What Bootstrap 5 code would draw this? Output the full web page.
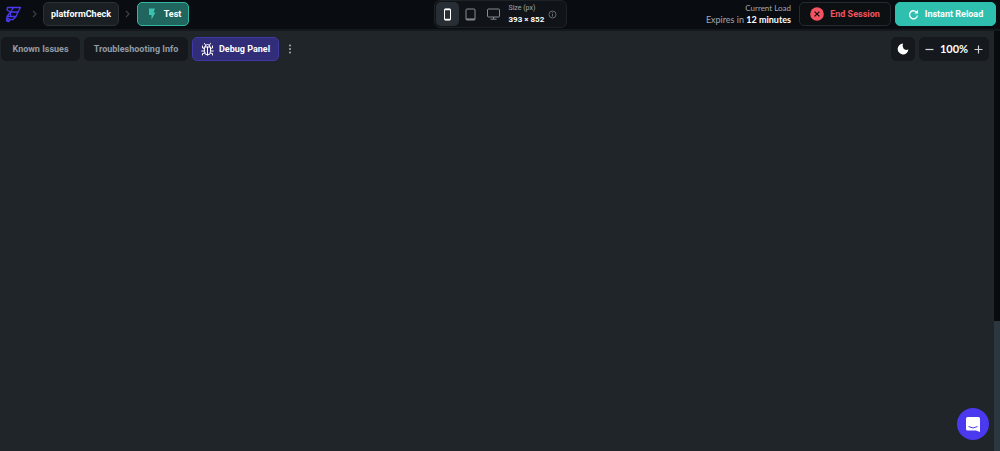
<!DOCTYPE html>
<html lang="en">
<head>
<meta charset="utf-8">
<meta name="viewport" content="width=device-width, initial-scale=1">
<title>platformCheck – Test</title>
<link href="https://cdn.jsdelivr.net/npm/bootstrap@5.3.0/dist/css/bootstrap.min.css" rel="stylesheet">
<style>
  body { background: #1f2528; color: #fff; font-family: Lato, "Liberation Sans", sans-serif; font-size: 10px; line-height: 12px; }
  svg { display: block; flex: none; }
  .topbar { background: #090d11; height: 31px; padding: 0 4px 1px; border-bottom: 2px solid #14191d; }
  .side { flex: 1 1 0; min-width: 0; }
  .chip { display: flex; align-items: center; justify-content: center; height: 24px; padding: 0 6px; border: 1px solid #15191d; border-radius: 5px; background: #15191d; color: #fff; font-family: Roboto, "Liberation Sans", sans-serif; font-size: 9px; line-height: 12px; font-weight: 700; text-decoration: none; white-space: nowrap; }
  .chip-project { background: #1a1f23; border-color: #2b3135; min-width: 76px; }
  .chip-test { background: #20665e; border-color: #32b7a3; min-width: 52px; gap: 5px; }
  .chip-end { background: #0c1013; border-color: #252b30; color: #f2555f; min-width: 92px; gap: 6px; }
  .chip-reload { background: #2fbfae; border-color: #2fbfae; min-width: 101px; gap: 6px; }
  .chip-muted { color: #929ba5; }
  .chip-issues { min-width: 79px; }
  .chip-trouble { min-width: 104px; }
  .chip-debug { background: #322d78; border-color: #4038a4; min-width: 87px; gap: 5px; }
  .devices { height: 28px; padding: 1px; border: 1px solid #1c2226; border-radius: 6px; background: #101418; min-width: 133px; }
  .device { width: 23px; height: 24px; padding: 0; border: 0; border-radius: 5px; background: transparent; color: #858c92; display: flex; align-items: center; justify-content: center; }
  .device.active { background: #272e35; color: #fff; }
  .tiny { font-family: Roboto, "Liberation Sans", sans-serif; font-size: 7px; line-height: 12px; white-space: nowrap; }
  .tiny .fw-bold { font-size: 8px; }
  .soft { color: #a1a8af; }
  .session { font-size: 9px; line-height: 12px; white-space: nowrap; }
  .session-title { font-size: 8px; }
  .toolbar { padding: 6px 5px 0 1px; gap: 4px; }
  .plain { background: none; border: 0; padding: 0; color: #d0d4d8; display: flex; align-items: center; justify-content: center; }
  .more { width: 14px; height: 24px; }
  .theme { width: 24px; padding: 0; }
  .zoom { width: 70px; padding: 0 5px; justify-content: space-between; font-family: Lato, "Liberation Sans", sans-serif; font-size: 11px; }
  .rail { width: 6px; background: #2c363e; }
  .thumb { height: 69%; background: #080b0e; }
  .chat { position: fixed; right: 11px; bottom: 11px; width: 32px; height: 32px; border: 0; border-radius: 50%; padding: 0; background: #4b39ef; display: flex; align-items: center; justify-content: center; }
</style>
</head>
<body class="d-flex flex-column vh-100 overflow-hidden">
<header class="topbar d-flex align-items-center flex-shrink-0">
  <nav class="side d-flex align-items-center" aria-label="Breadcrumb">
    <a href="#" aria-label="Home"><svg width="19" height="19" viewBox="0 0 19 19" fill="none" stroke="#4b39ef" stroke-width="1.300" stroke-linejoin="round"><path d="M3.500 2.500h13l-2.500 4.500H6.500L3 5z"/><path d="M9.500 2.500L6.500 7v4.500M14 7l-2 4.500H3L6.500 7M3 11.500V15l1.500 1.500L6.500 14.500H9l3-3"/><circle cx="4" cy="15" r="1.500"/></svg></a>
    <svg width="20" height="10" viewBox="0 0 20 10" fill="none" stroke="#3a4147" stroke-width="1.200"><path d="M10 2l3 3-3 3"/></svg>
    <a class="chip chip-project" href="#">platformCheck</a>
    <svg width="18" height="10" viewBox="0 0 18 10" fill="none" stroke="#3a4147" stroke-width="1.200"><path d="M7 2l3 3-3 3"/></svg>
    <button class="chip chip-test" type="button"><svg width="14" height="12" viewBox="-2 0 14 12" fill="#39c4af"><path d="M2 .500h6L6.500 4.500H8.500L4.500 11.500V7H2z"/></svg>Test</button>
  </nav>

  <div class="devices d-flex align-items-center">
    <button class="device active" type="button" aria-label="Phone"><svg width="9" height="13" viewBox="0 0 9 13" fill="none" stroke="currentColor"><rect x="1.500" y="1" width="6" height="11" rx="1"/><path d="M1.500 1.500h6M1.500 11.500h6" stroke-width="1.500"/></svg></button>
    <button class="device" type="button" aria-label="Tablet"><svg width="11" height="13" viewBox="0 0 11 13" fill="none" stroke="currentColor"><rect x="1" y="1" width="9" height="11" rx="1"/><path d="M1 11.200h9" stroke-width="1.500"/></svg></button>
    <button class="device" type="button" aria-label="Desktop"><svg width="13" height="12" viewBox="0 0 13 12" fill="none" stroke="currentColor"><rect x=".5" y="1" width="12" height="8" rx="1"/><path d="M3.500 11.200h6M6.500 9v2"/></svg></button>
    <div class="tiny ms-1"><div class="soft">Size (px)</div><div class="fw-bold">393 × 852</div></div>
    <svg class="ms-1" width="9" height="9" viewBox="0 0 9 9" fill="none" stroke="#626a70"><circle cx="4.500" cy="4.500" r="3.500"/><path d="M4.500 4v2.500M4.500 2.300v1"/></svg>
  </div>

  <div class="side d-flex align-items-center justify-content-end">
    <div class="session text-end soft me-2"><div class="session-title">Current Load</div><div>Expires in <span class="fw-bold text-white">12 minutes</span></div></div>
    <button class="chip chip-end me-1" type="button"><svg width="14" height="14" viewBox="0 0 14 14"><circle cx="7" cy="7" r="6.800" fill="#f45462"/><path d="M4.600 4.600l4.800 4.800M9.400 4.600l-4.800 4.800" stroke="#0c1013" stroke-width="1.300"/></svg>End Session</button>
    <button class="chip chip-reload" type="button"><svg width="11" height="11" viewBox="0 0 11 11" fill="none" stroke="#fff" stroke-width="1.300"><path d="M9 3.700A4 4 0 1 0 9.500 6.500"/><path d="M10 .8v3.700H6.300z" fill="#fff" stroke="none"/></svg>Instant Reload</button>
  </div>
</header>

<main class="d-flex flex-grow-1">
  <div class="flex-grow-1">
    <div class="toolbar d-flex align-items-center">
      <button class="chip chip-muted chip-issues" type="button">Known Issues</button>
      <button class="chip chip-muted chip-trouble" type="button">Troubleshooting Info</button>
      <button class="chip chip-debug" type="button"><svg width="13" height="14" viewBox="0 0 13 14" fill="none" stroke="#fff" stroke-linecap="round"><path d="M3.500 5h6v4.500a3 3.500 0 0 1-6 0zM6.500 5v8"/><path d="M4 5a2.500 2.500 0 0 1 5 0M4.500 3L3.500 1.500M8.500 3l1-1.500M3.500 6.500L1.500 6V4M3.500 9H.7M3.800 11L1.500 11.500V13M9.500 6.500l2-.5V4M9.500 9h2.800M9.200 11l2.300.5V13"/></svg>Debug Panel</button>
      <button class="plain more" type="button" aria-label="More"><svg width="4" height="10" viewBox="0 0 4 10" fill="#aab0b5"><circle cx="2" cy="1.500" r="1"/><circle cx="2" cy="5" r="1"/><circle cx="2" cy="8.500" r="1"/></svg></button>
      <button class="chip theme ms-auto" type="button" aria-label="Dark mode"><svg width="12" height="12" viewBox="0 0 12 12" fill="#fff"><path d="M6 .6A5.400 5.400 0 1 0 11.400 6.600Q8 7.600 6.500 5.500 5 3 6 .6z"/></svg></button>
      <div class="chip zoom">
        <button class="plain" type="button" aria-label="Zoom out"><svg width="9" height="9" viewBox="0 0 9 9" stroke="currentColor" stroke-width="1.200"><path d="M.5 4.500h8"/></svg></button>
        <span>100%</span>
        <button class="plain" type="button" aria-label="Zoom in"><svg width="9" height="9" viewBox="0 0 9 9" stroke="currentColor" stroke-width="1.200"><path d="M.5 4.500h8M4.500 .5v8"/></svg></button>
      </div>
    </div>
  </div>
  <div class="rail"><div class="thumb"></div></div>
</main>
<button class="chat" type="button" aria-label="Open chat"><svg width="16" height="16" viewBox="0 0 16 16"><path d="M2.500 1h11A1.500 1.500 0 0 1 15 2.500V16l-4-1.500H2.500A1.500 1.500 0 0 1 1 13V2.500A1.500 1.500 0 0 1 2.500 1z" fill="#fff"/><path d="M3.500 10.500q4.500 3 9 0" fill="none" stroke="#4b39ef"/></svg></button>
<script src="https://cdn.jsdelivr.net/npm/bootstrap@5.3.0/dist/js/bootstrap.bundle.min.js"></script>
</body>
</html>
